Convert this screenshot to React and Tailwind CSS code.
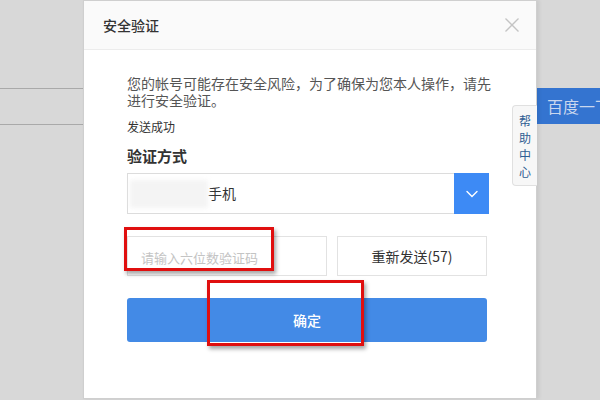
const font = { fontFamily: '"Noto Sans CJK SC", "Liberation Sans", sans-serif' };

function Chevron() {
  return (
    <svg viewBox="0 0 12 8" width="12" height="8" fill="none" stroke="white" strokeWidth="1.4" strokeLinecap="round">
      <polyline points="1 1.5 6 6.5 11 1.5" />
    </svg>
  );
}

function CloseIcon() {
  return (
    <svg viewBox="0 0 14 14" width="14" height="14" fill="none" stroke="#c4c4c4" strokeWidth="1.3">
      <line x1="0.5" y1="0.5" x2="13.5" y2="13.5" />
      <line x1="13.5" y1="0.5" x2="0.5" y2="13.5" />
    </svg>
  );
}

export default function App() {
  return (
    <div className="relative w-[600px] h-[400px] overflow-hidden bg-[#d8d8d8]" style={font}>
      {/* page behind the overlay */}
      <div className="absolute left-0 top-[88px] w-[83px] h-[37px] border-y border-[#a9a9a9]" />
      <div className="absolute left-[537px] top-[88px] w-[63px] h-[36px] bg-[#3474d0] text-[#c9d7ee] text-[16px] leading-[36px] pl-[10px] whitespace-nowrap overflow-hidden">
        百度一下
      </div>

      {/* dialog */}
      <div className="absolute left-[83px] top-0 w-[454px] h-[399px] bg-white border border-[#cfcfcf] shadow-[2px_0_4px_rgba(0,0,0,0.08)] flex flex-col">
        <div className="h-[49px] shrink-0 bg-[#fafafa] border-b border-[#ececec] flex items-center justify-between pl-[19px] pr-[17px]">
          <span className="text-[14px] font-medium text-[#333]">安全验证</span>
          <CloseIcon />
        </div>

        <div className="flex flex-col pl-[43px] pr-[47px] pt-[25px]">
          <p className="text-[14px] leading-[17px] text-[#555] w-[370px]">
            您的帐号可能存在安全风险，为了确保为您本人操作，请先进行安全验证。
          </p>
          <p className="mt-[10px] text-[12px] leading-[16px] text-[#333]">发送成功</p>
          <p className="mt-[12px] text-[15px] leading-[18px] font-bold text-[#333]">验证方式</p>

          <div className="mt-[8px] w-[362px] h-[41px] border border-[#dcdcdc] flex items-stretch">
            <div className="flex-1 flex items-center">
              <div className="ml-[2px] w-[78px] h-[28px] bg-[#f4f4f4] blur-[2px]" />
              <span className="text-[14px] text-[#333]">手机</span>
            </div>
            <div className="w-[35px] -my-px -mr-px bg-[#3d8af5] flex items-center justify-center">
              <Chevron />
            </div>
          </div>

          <div className="mt-[22px] flex gap-[10px]">
            <div className="w-[200px] h-[40px] border border-[#e2e2e2] flex items-center pl-[13px] pt-[4px]">
              <span className="text-[13px] text-[#c4c4c4]">请输入六位数验证码</span>
            </div>
            <button className="w-[150px] h-[40px] border border-[#e2e2e2] bg-white text-[14px] text-[#333]">
              重新发送(57)
            </button>
          </div>

          <button className="mt-[22px] w-[360px] h-[44px] rounded-[3px] bg-[#438ae6] text-white text-[14px] font-medium">
            确定
          </button>
        </div>
      </div>

      {/* help tab */}
      <div className="absolute left-[512px] top-[105px] w-[25px] h-[81px] bg-[#f7f7f7] border border-r-0 border-[#e0e0e0] rounded-l-[4px] flex flex-col items-center justify-center text-[12px] leading-[17px] text-[#2f5e93]">
        <span>帮</span>
        <span>助</span>
        <span>中</span>
        <span>心</span>
      </div>

      {/* annotation boxes */}
      <div className="absolute left-[124px] top-[227px] w-[150px] h-[44px] border-[3px] border-[#e00f0f] shadow-[2px_3px_4px_rgba(0,0,0,0.35)]" />
      <div className="absolute left-[207px] top-[280px] w-[157px] h-[66px] border-[3px] border-[#e00f0f] shadow-[2px_3px_4px_rgba(0,0,0,0.35)]" />
    </div>
  );
}
